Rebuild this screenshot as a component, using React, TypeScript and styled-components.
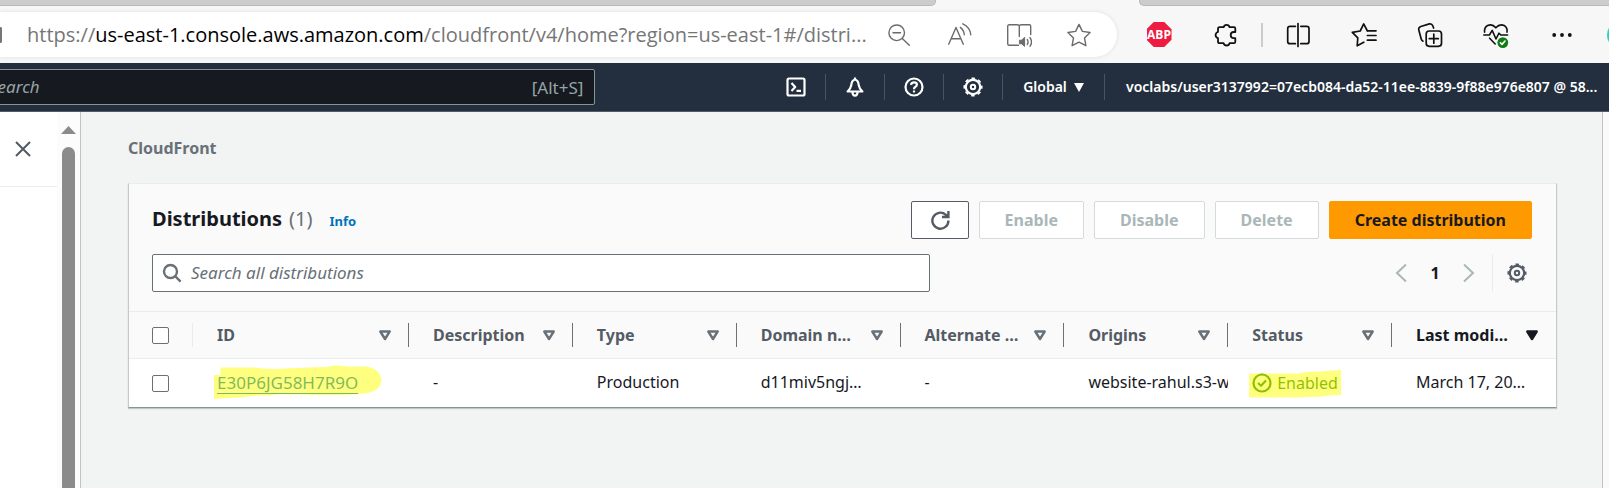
import React from "react";
import styled, { createGlobalStyle, css } from "styled-components";

const sans = '"Noto Sans", "Open Sans", sans-serif';

const GlobalStyle = createGlobalStyle`
  *, *::before, *::after { box-sizing: border-box; }
  html, body, #root { height: 100%; }
  body { margin: 0; background: #f2f3f3; font-family: ${sans}; font-size: 16px; color: #16191f; }
  button, input { font: inherit; color: inherit; margin: 0; padding: 0; }
  svg { display: block; flex: none; }
`;

const Page = styled.div`
  display: flex;
  flex-direction: column;
  min-height: 100%;
  overflow: hidden;
`;

/* Browser frame */

const TabStrip = styled.div`
  display: flex;
  justify-content: space-between;
  height: 6px;
  background: #f7f7f7;
`;

const InactiveTabs = styled.div<{ $side: "left" | "right" }>`
  flex: 0 0 auto;
  width: ${(p) => (p.$side === "left" ? "58.2%" : "29.2%")};
  background: #cccccc;
  border-bottom: 1px solid #b9b9b9;
  ${(p) =>
    p.$side === "left"
      ? css`
          border-right: 1px solid #b9b9b9;
          border-bottom-right-radius: 5px;
        `
      : css`
          border-left: 1px solid #b9b9b9;
          border-bottom-left-radius: 5px;
        `}
`;

const BrowserBar = styled.div`
  display: flex;
  align-items: center;
  height: 57px;
  background: #f7f7f7;
`;

const AddressBar = styled.div`
  flex: 1;
  min-width: 0;
  display: flex;
  align-items: center;
  height: 45px;
  padding-right: 8px;
  background: #fff;
  border-radius: 0 23px 23px 0;
  box-shadow: 0 0 4px rgba(0, 0, 0, 0.1);
`;

const SiteInfo = styled.span`
  flex: none;
  width: 2px;
  height: 16px;
  margin-right: 25px;
  border: solid #767676;
  border-width: 2px 2px 2px 0;
  border-radius: 0 3px 3px 0;
`;

const Url = styled.div`
  flex: 1;
  min-width: 0;
  overflow: hidden;
  white-space: nowrap;
  font: 20px/28px "Open Sans", "Noto Sans", sans-serif;
  color: #767676;

  b {
    font-weight: 400;
    color: #000;
  }
`;

const BarButton = styled.button<{ $wide?: boolean; $muted?: boolean }>`
  flex: none;
  display: flex;
  align-items: center;
  justify-content: center;
  width: ${(p) => (p.$wide ? 66 : 60)}px;
  height: 40px;
  border: 0;
  background: none;
  color: ${(p) => (p.$muted ? "#6b6b6b" : "#111")};
`;

const Extensions = styled.div`
  flex: none;
  display: flex;
  align-items: center;
  margin-left: 9px;
`;

const BarDivider = styled.span`
  width: 2px;
  height: 24px;
  margin: 0 2px 0 3px;
  background: #cccccc;
`;

const Octagon = styled.span`
  display: flex;
  align-items: center;
  justify-content: center;
  width: 25px;
  height: 25px;
  background: #ee1c40;
  color: #fff;
  font: 700 12px/25px "Open Sans", sans-serif;
  clip-path: polygon(29% 0, 71% 0, 100% 29%, 100% 71%, 71% 100%, 29% 100%, 0 71%, 0 29%);
`;

const Profile = styled.span`
  width: 2px;
  height: 28px;
  margin-left: 12px;

  &::before {
    content: "";
    display: block;
    width: 28px;
    height: 28px;
    border-radius: 50%;
    background: #2fd0c0;
  }
`;

/* Console navigation */

const ConsoleNav = styled.header`
  display: flex;
  align-items: center;
  height: 49px;
  background: #232f3e;
  border-bottom: 1px solid #545b64;
  overflow: hidden;
`;

const NavSearch = styled.label`
  flex: none;
  display: flex;
  align-items: center;
  width: calc(37% + 56px);
  height: 36px;
  margin-left: -56px;
  padding: 0 11px 0 44px;
  background: #16191f;
  border: 1px solid #879596;
  border-radius: 2px;
  color: #95a5a6;

  input {
    flex: 1;
    min-width: 0;
    border: 0;
    outline: 0;
    background: none;
  }
  input::placeholder {
    font-style: italic;
    font-size: 17px;
    color: #95a5a6;
    opacity: 1;
  }
`;

const Shortcut = styled.span`
  font-size: 17px;
`;

const NavItems = styled.nav`
  flex: none;
  display: flex;
  align-items: center;
  margin-left: auto;
`;

const NavButton = styled.button<{ $text?: boolean }>`
  display: flex;
  align-items: center;
  justify-content: center;
  gap: 7px;
  min-width: ${(p) => (p.$text ? 102 : 59)}px;
  height: 26px;
  border: 0;
  border-right: 1px solid #4a535f;
  background: none;
  color: #fff;
  font: 600 14px/20px ${sans};
`;

const Account = styled.button`
  width: 504px;
  padding-left: 21px;
  border: 0;
  background: none;
  color: #fff;
  font: 600 14px/20px ${sans};
  text-align: left;
  white-space: nowrap;
  overflow: hidden;
`;

/* Body */

const Body = styled.div`
  flex: 1;
  display: flex;
`;

const SideNav = styled.aside`
  flex: none;
  display: flex;
  width: 81px;
  background: #fff;
  border-right: 1px solid #bfc5c6;
`;

const SideHead = styled.div`
  width: 57px;
  height: 75px;
  display: flex;
  align-items: center;
  padding-left: 15px;
  border-bottom: 1px solid #eaeded;
`;

const CloseButton = styled.button`
  border: 0;
  background: none;
  color: #545b64;
`;

const ScrollTrack = styled.div`
  flex: 1;
  display: flex;
  flex-direction: column;
  align-items: center;
  gap: 13px;
  padding-top: 14px;
  background: #fcfcfc;
`;

const ScrollThumb = styled.div`
  flex: 1;
  width: 13px;
  background: #8b8b8b;
  border-radius: 7px 7px 0 0;
`;

const Main = styled.main`
  flex: 1;
  min-width: 0;
  padding: 24px 45px 24px 47px;
`;

const RightRail = styled.aside`
  flex: none;
  width: 7px;
  background: #fafafa;
  border-left: 1px solid #bfc5c6;
`;

const Crumb = styled.a`
  display: block;
  width: fit-content;
  margin-bottom: 23px;
  font-weight: 700;
  line-height: 24px;
  color: #687078;
  text-decoration: none;
`;

const Card = styled.section`
  background: #fff;
  border: 1px solid;
  border-color: #eaeded #c4caca #879596;
  box-shadow: 0 1px 1px rgba(0, 28, 36, 0.2);
`;

const CardHead = styled.div`
  display: flex;
  flex-direction: column;
  gap: 15px;
  padding: 17px 24px 19px 23px;
  background: #fafafa;
`;

const HeadRow = styled.div`
  display: flex;
  align-items: center;
  justify-content: space-between;
`;

const Title = styled.h1`
  display: flex;
  align-items: baseline;
  gap: 7px;
  margin: 0;
  font-size: 20px;
  line-height: 28px;
`;

const Count = styled.span`
  font-weight: 400;
  color: #687078;
`;

const InfoLink = styled.a`
  margin-left: 10px;
  font-size: 13px;
  color: #0073bb;
  text-decoration: none;
`;

const Actions = styled.div`
  display: flex;
  gap: 10px;
`;

const Button = styled.button<{ $kind?: "primary" | "icon" }>`
  display: flex;
  align-items: center;
  justify-content: center;
  height: 38px;
  padding: 0 ${(p) => (p.$kind === "icon" ? 18 : 25)}px;
  border: 1px solid #545b64;
  border-radius: 2px;
  background: #fff;
  color: #545b64;
  font-weight: 700;

  &:disabled {
    border-color: #d5dbdb;
    color: #aab7b8;
  }
  ${(p) =>
    p.$kind === "primary" &&
    css`
      background: #ff9900;
      border-color: #ff9900;
      color: #16191f;
    `}
`;

const Filter = styled.label`
  display: flex;
  align-items: center;
  gap: 9px;
  width: 56.4%;
  height: 38px;
  padding: 0 9px;
  background: #fff;
  border: 1px solid #687078;
  border-radius: 2px;
  color: #687078;

  input {
    flex: 1;
    border: 0;
    outline: 0;
    background: none;
  }
  input::placeholder {
    font-style: italic;
    font-size: 17px;
    color: #687078;
    opacity: 1;
  }
`;

const Pager = styled.div`
  display: flex;
  align-items: center;
`;

const PagerItem = styled.button<{ $current?: boolean }>`
  display: flex;
  align-items: center;
  justify-content: center;
  width: 34px;
  height: 38px;
  border: 0;
  background: none;
  color: ${(p) => (p.$current ? "#16191f" : "#aab7b8")};
  font-weight: 700;
`;

const Preferences = styled.button`
  display: flex;
  align-items: center;
  height: 38px;
  margin-left: 6px;
  padding: 0 5px 0 14px;
  border: 0;
  border-left: 1px solid #eaeded;
  background: none;
  color: #545b64;
`;

const Table = styled.table`
  width: 100%;
  table-layout: fixed;
  border-collapse: separate;
  border-spacing: 0;
  text-align: left;
  line-height: 22px;
`;

const Th = styled.th<{ $width?: number; $active?: boolean }>`
  width: ${(p) => (p.$width ? `${p.$width}px` : "auto")};
  height: 48px;
  padding: 0;
  background: #fafafa;
  border: solid #eaeded;
  border-width: 1px 0;
  color: ${(p) => (p.$active ? "#16191f" : "#545b64")};
  font-weight: 700;
  white-space: nowrap;
`;

const HeadCell = styled.div<{ $select?: boolean; $last?: boolean }>`
  display: flex;
  align-items: center;
  justify-content: space-between;
  height: 24px;
  padding: 0 17px 0 ${(p) => (p.$select ? 23 : 24)}px;
  border-right: 1px solid ${(p) => (p.$last ? "transparent" : p.$select ? "#eaeded" : "#687078")};
`;

const Td = styled.td<{ $clip?: boolean; $select?: boolean }>`
  height: 48px;
  padding: ${(p) => (p.$select ? "0 16px 0 23px" : p.$clip ? "0 0 2px 24px" : "0 16px 2px 24px")};
  background: #fff;
  white-space: nowrap;
  overflow: ${(p) => (p.$clip ? "hidden" : "visible")};
`;

const Checkbox = styled.input`
  display: block;
  appearance: none;
  width: 17px;
  height: 17px;
  border: 1px solid #687078;
  border-radius: 2px;
  background: #fff;
`;

const Marked = styled.span`
  position: relative;
  display: inline-flex;
  align-items: center;
  gap: 5px;
  height: 22px;
  vertical-align: middle;
`;

const Marker = styled.svg<{ $top: number }>`
  position: absolute;
  left: -3px;
  top: ${(p) => p.$top}px;
  pointer-events: none;
`;

const IdLink = styled.a`
  font-size: 17px;
  line-height: 21px;
  color: #0073bb;
  text-decoration: none;
  border-bottom: 1px solid;
`;

const Status = styled.span`
  color: #1d8102;
`;

const stroke = {
  fill: "none",
  stroke: "currentColor",
  strokeLinecap: "round" as const,
  strokeLinejoin: "round" as const,
};

const BarIcon = ({ children }: { children: React.ReactNode }) => (
  <svg width="26" height="26" viewBox="0 0 26 26" strokeWidth="1.4" {...stroke} aria-hidden="true">
    {children}
  </svg>
);

const SmallIcon = ({ children, width = 2.2 }: { children: React.ReactNode; width?: number }) => (
  <svg
    width="20"
    height="20"
    viewBox="0 0 20 20"
    fill="none"
    stroke="currentColor"
    strokeWidth={width}
    strokeLinejoin="round"
    aria-hidden="true"
  >
    {children}
  </svg>
);

const Gear = () => (
  <SmallIcon>
    <circle cx="10" cy="10" r="7.2" />
    <circle cx="10" cy="10" r="8.7" strokeWidth="1.7" strokeDasharray="3.6 3.233" strokeDashoffset="1.8" />
    <circle cx="10" cy="10" r="2.2" strokeWidth="2" />
  </SmallIcon>
);

const SortIcon = ({ filled }: { filled?: boolean }) => (
  <svg width="12" height="11" viewBox="0 0 12 11" aria-hidden="true">
    <path
      d="M1.3 1.5H10.7L6 9Z"
      fill={filled ? "#16191f" : "none"}
      stroke={filled ? "#16191f" : "#687078"}
      strokeWidth="2.4"
      strokeLinejoin="round"
    />
  </svg>
);

const columns = ["ID", "Description", "Type", "Domain n…", "Alternate …", "Origins", "Status", "Last modi…"];

export default function App() {
  return (
    <Page>
      <GlobalStyle />
      <TabStrip>
        <InactiveTabs $side="left" />
        <InactiveTabs $side="right" />
      </TabStrip>
      <BrowserBar>
        <AddressBar>
          <SiteInfo />
          <Url>
            https://<b>us-east-1.console.aws.amazon.com</b>/cloudfront/v4/home?region=us-east-1#/distri...
          </Url>
          <BarButton $muted aria-label="Zoom out">
            <BarIcon>
              <circle cx="10.7" cy="10.8" r="7.8" />
              <path d="M16.3 16.5 23.3 23.3M7 10.8H14.5" />
            </BarIcon>
          </BarButton>
          <BarButton $muted aria-label="Read aloud">
            <BarIcon>
              <path d="M2.7 22.2 10 5.5 17.3 22.2M5 16.8H15M14.3 5.4Q18 8.2 18.3 12.8M16.8 1.8Q24 5 24.8 12.8" />
            </BarIcon>
          </BarButton>
          <BarButton $muted aria-label="Immersive reader">
            <BarIcon>
              <path d="M12.5 23.2H3.2Q1.7 23.2 1.7 21.7V4.3Q1.7 2.8 3.2 2.8H11.3Q13.3 2.8 13.3 4.6Q13.3 2.8 15.3 2.8H23.2Q24.7 2.8 24.7 4.3V12.6M13.3 4.6V14.5" />
              <path d="M13.8 18.2H15.6L18.6 15.4V24.4L15.6 21.8H13.8Z" fill="currentColor" strokeWidth="1" />
              <path d="M21.3 17.6Q22.8 20 21.3 22.4M24 15.6Q27 20 24 24.2" />
            </BarIcon>
          </BarButton>
          <BarButton $muted aria-label="Add to favorites">
            <BarIcon>
              <path d="M13 2.4 16.4 9.4 24.1 10.5 18.5 16 19.9 23.7 13 20.1 6.1 23.7 7.5 16 1.9 10.5 9.6 9.4Z" />
            </BarIcon>
          </BarButton>
        </AddressBar>
        <Extensions>
          <BarButton $wide>
            <Octagon>ABP</Octagon>
          </BarButton>
          <BarButton $wide aria-label="Extensions">
            <BarIcon>
              <g strokeWidth="1.8">
                <path d="M7.5 5.2H11.6A3.1 3.1 0 0 1 17.6 5.2H22Q23.3 5.2 23.3 6.6V10H21.8A3.1 3.1 0 0 0 21.8 16.2H23.3V19.8Q23.3 21.2 22 21.2H17.6A3.1 3.1 0 0 1 11.6 21.2H7.5Q6 21.2 6 19.7V16.2A3.2 3.2 0 0 1 6 10V6.7Q6 5.2 7.5 5.2Z" />
              </g>
            </BarIcon>
          </BarButton>
          <BarDivider />
          <BarButton $wide aria-label="Split screen">
            <BarIcon>
              <g strokeWidth="1.7">
                <path d="M10.4 4.3H5Q2.7 4.3 2.7 6.6V19.4Q2.7 21.7 5 21.7H10.4M15.8 4.3H21.7Q24 4.3 24 6.6V19.4Q24 21.7 21.7 21.7H15.8M13 1.6V24.4" />
              </g>
            </BarIcon>
          </BarButton>
          <BarButton $wide aria-label="Favorites">
            <BarIcon>
              <g strokeWidth="1.7">
                <path d="M16.4 9 12.7 1.9 9.2 9 1.3 10.4 6.8 15.8 6.2 23.8 12.8 20.2M16.4 8.8H25M16.4 13.5H25M16.4 18.2H25" />
              </g>
            </BarIcon>
          </BarButton>
          <BarButton $wide aria-label="Collections">
            <BarIcon>
              <g strokeWidth="1.7">
                <rect x="9.2" y="9" width="15.3" height="15.3" rx="3" />
                <path d="M16.8 12.2V21.2M12.3 16.7H21.3M6 19.2Q4.6 18.4 4.2 17L1.8 8Q1.2 5.3 3.8 4.5L12.4 1.9Q14.8 1.4 15.8 3.8L16.6 6" />
              </g>
            </BarIcon>
          </BarButton>
          <BarButton $wide aria-label="Browser essentials">
            <BarIcon>
              <g strokeWidth="1.6">
                <path d="M1.6 10.2Q1 5.6 4.6 3.5Q9.4 1.4 12.8 5.8Q16.6 1.4 21.2 3.5Q24.8 5.8 24 10.2M.8 13H6.4L9.2 8.4 13 17 16 11.2 17.8 13H24.6M6.6 16.2 12.2 22" />
                <circle cx="19.8" cy="20.6" r="5.4" fill="#107c10" stroke="none" />
                <path d="M17.4 20.8 19 22.4 22 19" stroke="#fff" />
              </g>
            </BarIcon>
          </BarButton>
          <BarButton $wide aria-label="Settings and more">
            <BarIcon>
              <g fill="currentColor" stroke="none">
                <circle cx="5.2" cy="13" r="1.9" />
                <circle cx="13" cy="13" r="1.9" />
                <circle cx="20.8" cy="13" r="1.9" />
              </g>
            </BarIcon>
          </BarButton>
          <Profile />
        </Extensions>
      </BrowserBar>

      <ConsoleNav>
        <NavSearch>
          <input type="search" placeholder="Search" aria-label="Search" />
          <Shortcut>[Alt+S]</Shortcut>
        </NavSearch>
        <NavItems>
          <NavButton aria-label="CloudShell">
            <SmallIcon>
              <rect x="1.5" y="1.5" width="17" height="17" rx="1.5" />
              <path d="M5.5 6 9.2 10 5.5 14M10.5 13.8H15" />
            </SmallIcon>
          </NavButton>
          <NavButton aria-label="Notifications">
            <SmallIcon>
              <path d="M10 2.5Q6.5 3.6 6.3 8.2Q5.8 11.5 2.6 14.5H17.4Q14.2 11.5 13.7 8.2Q13.5 3.6 10 2.5ZM10 .6V3M7.4 15Q7.6 18.7 10 18.7Q12.4 18.7 12.6 15" />
            </SmallIcon>
          </NavButton>
          <NavButton aria-label="Help">
            <SmallIcon>
              <circle cx="10" cy="10" r="8.5" />
              <path d="M7 7.9Q7.2 5.3 10 5.3Q12.9 5.3 12.9 7.6Q12.9 9.1 11.2 9.9Q10 10.5 10 12.2M10 13.4V15.6" />
            </SmallIcon>
          </NavButton>
          <NavButton aria-label="Settings">
            <Gear />
          </NavButton>
          <NavButton $text>
            Global
            <svg width="10" height="9" viewBox="0 0 10 9" aria-hidden="true">
              <path d="M0 0H10L5 9Z" fill="#fff" />
            </svg>
          </NavButton>
          <Account>voclabs/user3137992=07ecb084-da52-11ee-8839-9f88e976e807 @ 58...</Account>
        </NavItems>
      </ConsoleNav>

      <Body>
        <SideNav>
          <SideHead>
            <CloseButton aria-label="Close navigation">
              <svg width="16" height="16" viewBox="0 0 16 16" aria-hidden="true">
                <path d="M1 1 15 15M15 1 1 15" stroke="currentColor" strokeWidth="2" />
              </svg>
            </CloseButton>
          </SideHead>
          <ScrollTrack>
            <svg width="15" height="8" viewBox="0 0 15 8" aria-hidden="true">
              <path d="M7.5 0 15 8H0Z" fill="#8b8b8b" />
            </svg>
            <ScrollThumb />
          </ScrollTrack>
        </SideNav>

        <Main>
          <Crumb href="#">CloudFront</Crumb>
          <Card>
            <CardHead>
              <HeadRow>
                <Title>
                  Distributions <Count>(1)</Count>
                  <InfoLink href="#">Info</InfoLink>
                </Title>
                <Actions>
                  <Button $kind="icon" aria-label="Refresh">
                    <SmallIcon width={2.4}>
                      <path d="M18.4 10.6A8 8 0 1 1 15.6 4.6L17.8 6.4M18.4 1V7H12" strokeLinejoin="miter" />
                    </SmallIcon>
                  </Button>
                  <Button disabled>Enable</Button>
                  <Button disabled>Disable</Button>
                  <Button disabled>Delete</Button>
                  <Button $kind="primary">Create distribution</Button>
                </Actions>
              </HeadRow>
              <HeadRow>
                <Filter>
                  <SmallIcon width={2.4}>
                    <circle cx="8.5" cy="8.5" r="6.5" />
                    <path d="M13 13 18.6 18.6" />
                  </SmallIcon>
                  <input type="search" placeholder="Search all distributions" aria-label="Search all distributions" />
                </Filter>
                <Pager>
                  <PagerItem aria-label="Previous page">
                    <svg width="12" height="20" viewBox="0 0 12 20" aria-hidden="true">
                      <path d="M11 1.5 2 10 11 18.5" fill="none" stroke="currentColor" strokeWidth="2" />
                    </svg>
                  </PagerItem>
                  <PagerItem $current>1</PagerItem>
                  <PagerItem aria-label="Next page">
                    <svg width="12" height="20" viewBox="0 0 12 20" aria-hidden="true">
                      <path d="M1 1.5 10 10 1 18.5" fill="none" stroke="currentColor" strokeWidth="2" />
                    </svg>
                  </PagerItem>
                  <Preferences aria-label="Preferences">
                    <Gear />
                  </Preferences>
                </Pager>
              </HeadRow>
            </CardHead>
            <Table>
              <thead>
                <tr>
                  <Th $width={64}>
                    <HeadCell $select>
                      <Checkbox type="checkbox" aria-label="Select all distributions" />
                    </HeadCell>
                  </Th>
                  {columns.map((name, i) => {
                    const last = i === columns.length - 1;
                    return (
                      <Th key={name} $width={i === 0 ? 216 : undefined} $active={last}>
                        <HeadCell $last={last}>
                          {name}
                          <SortIcon filled={last} />
                        </HeadCell>
                      </Th>
                    );
                  })}
                </tr>
              </thead>
              <tbody>
                <tr>
                  <Td $select>
                    <Checkbox type="checkbox" aria-label="Select E30P6JG58H7R9O" />
                  </Td>
                  <Td>
                    <Marked>
                      <IdLink href="#">E30P6JG58H7R9O</IdLink>
                      <Marker $top={-7} width="168" height="34" viewBox="0 0 168 34" aria-hidden="true">
                        <path
                          d="M0 10H6.5V2.5H40Q52 4 62 4Q90 2.5 113 2Q118 0 124 .5Q134 2 141 1.5H151Q166 3 167.5 15Q167 26 151 28.5Q140 30 97 30Q88 29 76 29.5Q68 28 54 30.5Q40 30 27 32.5Q14 32.5 0 34Z"
                          fill="#ff0"
                          fillOpacity=".5"
                        />
                      </Marker>
                    </Marked>
                  </Td>
                  <Td>-</Td>
                  <Td>Production</Td>
                  <Td>d11miv5ngj…</Td>
                  <Td>-</Td>
                  <Td $clip>website-rahul.s3-w</Td>
                  <Td>
                    <Marked>
                      <Status>
                        <SmallIcon>
                          <circle cx="10" cy="10" r="8.5" />
                          <path d="M6 10 9 12.8 14 7.6" />
                        </SmallIcon>
                      </Status>
                      <Status>Enabled</Status>
                      <Marker $top={-2} width="92" height="28" viewBox="0 0 92 28" aria-hidden="true">
                        <path d="M0 3.5H50Q56 1.5 70 1.5L92 0V25Q76 25.5 70 27Q60 26.5 50 27.5H0Z" fill="#ff0" fillOpacity=".5" />
                      </Marker>
                    </Marked>
                  </Td>
                  <Td>March 17, 20…</Td>
                </tr>
              </tbody>
            </Table>
          </Card>
        </Main>
        <RightRail />
      </Body>
    </Page>
  );
}
